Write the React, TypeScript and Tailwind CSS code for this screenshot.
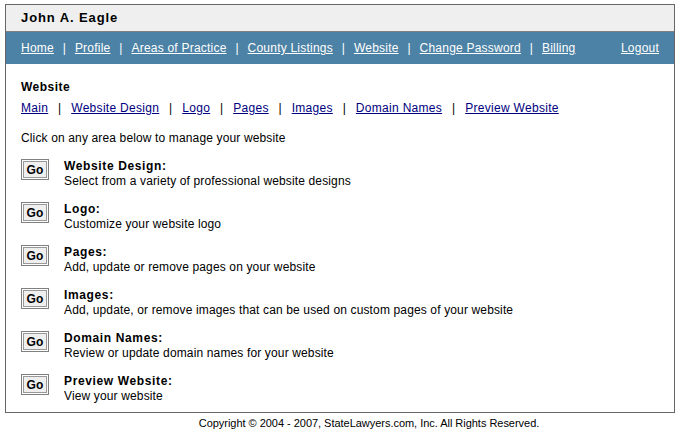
import React from "react";

const topLinks = ["Home", "Profile", "Areas of Practice", "County Listings", "Website", "Change Password", "Billing"];
const subLinks = ["Main", "Website Design", "Logo", "Pages", "Images", "Domain Names", "Preview Website"];

const areas = [
  { title: "Website Design:", text: "Select from a variety of professional website designs" },
  { title: "Logo:", text: "Customize your website logo" },
  { title: "Pages:", text: "Add, update or remove pages on your website" },
  { title: "Images:", text: "Add, update, or remove images that can be used on custom pages of your website" },
  { title: "Domain Names:", text: "Review or update domain names for your website" },
  { title: "Preview Website:", text: "View your website" },
];

const GoButton = () => (
  <button className="w-[28px] h-[21px] bg-[#efefef] border border-[#808080] shadow-[inset_0_0_0_1px_#ffffff,inset_0_0_0_2px_#999999] text-[12px] font-bold text-black leading-none flex items-center justify-center">
    Go
  </button>
);

export default function App() {
  return (
    <div className="w-[680px] h-[435px] bg-white pt-[4px] font-['Liberation_Sans',Arial,sans-serif] text-[12px] tracking-[0.14px] text-black overflow-hidden">
      <div className="mx-[5px] w-[670px] h-[409px] border border-[#666666]">
        <div className="h-[27px] bg-[#efefef] border-b border-[#808080] pl-[15px] flex items-center font-bold text-[13px] tracking-[0.9px]">
          John A. Eagle
        </div>
        <div className="h-[32px] bg-[#4c82a5] text-white px-[15px] flex items-center justify-between tracking-[0.22px]">
          <div className="flex items-center">
            {topLinks.map((link, i) => (
              <span key={link} className="flex items-center">
                {i > 0 && <span className="w-[21px] text-center">|</span>}
                <a href="#" className="underline">{link}</a>
              </span>
            ))}
          </div>
          <a href="#" className="underline">Logout</a>
        </div>
        <div className="pl-[15px] pt-[16px]">
          <div className="font-bold leading-[15px] tracking-[0.5px]">Website</div>
          <div className="flex items-center mt-[6px] leading-[15px] tracking-[0.3px]">
            {subLinks.map((link, i) => (
              <span key={link} className="flex items-center">
                {i > 0 && <span className="w-[23px] text-center">|</span>}
                <a href="#" className="underline text-[#000080]">{link}</a>
              </span>
            ))}
          </div>
          <p className="mt-[15px] leading-[15px]">Click on any area below to manage your website</p>
          <div className="mt-[13px] flex flex-col gap-[13px]">
            {areas.map((area) => (
              <div key={area.title} className="flex items-start h-[30px]">
                <GoButton />
                <div className="ml-[15px] leading-[15px]">
                  <div className="font-bold tracking-[0.63px]">{area.title}</div>
                  <div>{area.text}</div>
                </div>
              </div>
            ))}
          </div>
        </div>
      </div>
      <div className="text-center text-[11px] tracking-[-0.03px] leading-[14px] mt-[3px] pl-[58px]">
        Copyright © 2004 - 2007, StateLawyers.com, Inc. All Rights Reserved.
      </div>
    </div>
  );
}
